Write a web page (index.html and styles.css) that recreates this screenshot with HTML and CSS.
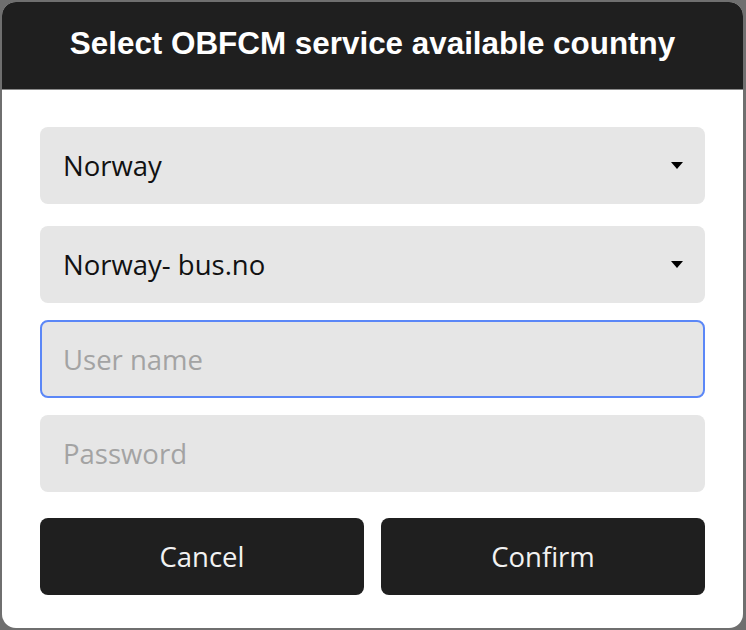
FILE: index.html
```html
<!DOCTYPE html>
<html>
<head>
<meta charset="utf-8">
<link rel="stylesheet" href="styles.css">
</head>
<body>
<div class="dialog">
  <div class="header">Select OBFCM service available countny</div>
  <div class="content">
    <div class="field select first"><span class="value">Norway</span><span class="caret"></span></div>
    <div class="field select second"><span class="value">Norway- bus.no</span><span class="caret"></span></div>
    <div class="field input focused"><span class="placeholder">User name</span></div>
    <div class="field input last"><span class="placeholder">Password</span></div>
    <div class="actions">
      <button class="btn">Cancel</button>
      <button class="btn">Confirm</button>
    </div>
  </div>
</div>
</body>
</html>
```
FILE: styles.css
```css
html, body {
  margin: 0;
  padding: 0;
  width: 746px;
  height: 630px;
  background: #6f6f6f;
  overflow: hidden;
}
body {
  padding: 2px 3px 2px 2px;
  box-sizing: border-box;
}
.dialog {
  width: 741px;
  height: 626px;
  background: #ffffff;
  border-radius: 14px;
  overflow: hidden;
  display: flex;
  flex-direction: column;
}
.header {
  height: 88px;
  flex: none;
  background: #1f1f1f;
  border-bottom: 1px solid #8a8a8a;
  color: #ffffff;
  font-family: "Liberation Sans", Arial, sans-serif;
  font-weight: bold;
  font-size: 31.4px;
  display: flex;
  align-items: center;
  justify-content: center;
  padding-bottom: 3px;
  box-sizing: border-box;
}
.content {
  padding: 37px 38px 0 38px;
  display: flex;
  flex-direction: column;
}
.field {
  height: 77px;
  background: #e6e6e6;
  border-radius: 8px;
  display: flex;
  align-items: center;
  padding: 0 22px 0 23px;
  box-sizing: border-box;
  font-family: "Open Sans", "Noto Sans", sans-serif;
  font-size: 27.5px;
  color: #111111;
}
.second { margin-top: 22px; }
.focused {
  margin-top: 17px;
  height: 78px;
  border: 2px solid #5b87f7;
  padding-left: 21px;
}
.last { margin-top: 17px; }
.value { flex: 1; }
.placeholder { color: #a3a3a3; }
.caret {
  width: 0;
  height: 0;
  border-left: 6px solid transparent;
  border-right: 6px solid transparent;
  border-top: 7px solid #000;
}
.actions {
  margin-top: 26px;
  display: grid;
  grid-template-columns: 1fr 1fr;
  gap: 17px;
}
.btn {
  height: 77px;
  background: #1f1f1f;
  color: #f2f2f2;
  border: none;
  border-radius: 8px;
  font-family: "Open Sans", "Noto Sans", sans-serif;
  font-size: 27.5px;
  padding: 0;
}
```
